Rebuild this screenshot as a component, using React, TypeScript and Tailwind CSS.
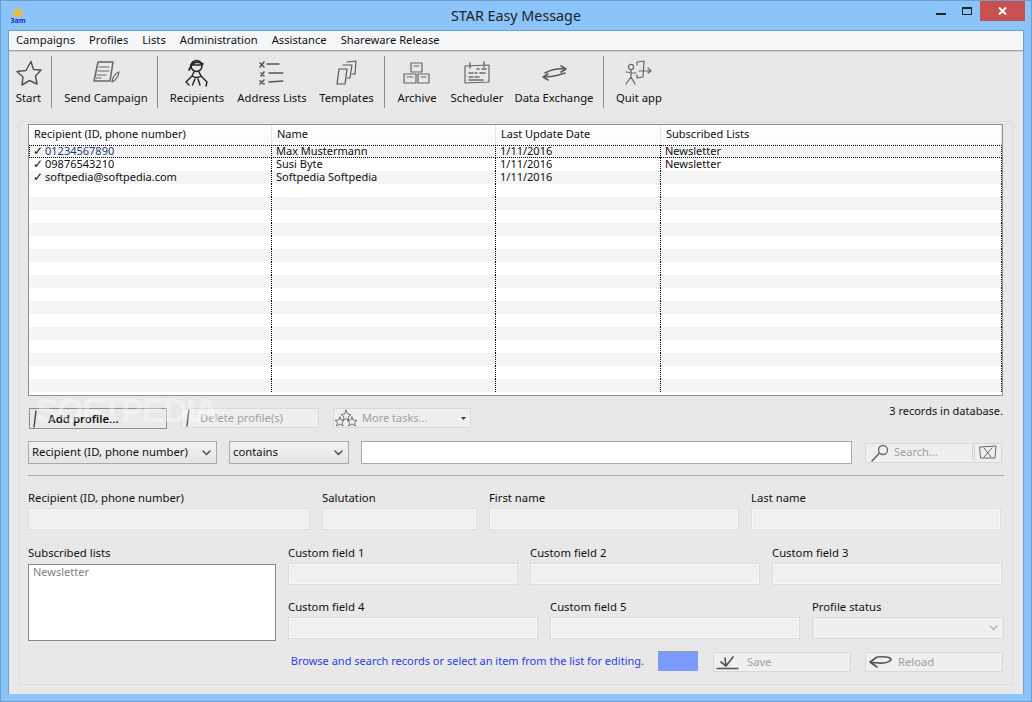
import React from "react";

const FONT = "font-['Noto_Sans','Open_Sans',sans-serif]";

const S = ({ w, h, box, children, className = "" }: { w: number; h: number; box?: string; children: React.ReactNode; className?: string }) => (
  <svg width={w} height={h} viewBox={box ?? `0 0 ${w} ${h}`} fill="none" stroke="currentColor" strokeLinecap="round" strokeLinejoin="round" className={className}>
    {children}
  </svg>
);

const StarIcon = () => (
  <S w={28} h={28} className="text-[#555]">
    <path d="M16 2.5 L18.5 10.5 L26 11 L20.5 17 L22 25 L14.5 21.5 L7 26 L8 18 L2 12.5 L11 11.5 Z" strokeWidth={1.5} />
  </S>
);
const SendIcon = () => (
  <S w={28} h={28} className="text-[#666]">
    <path d="M6 3 L21 3 L18 22 L2 22 Z" strokeWidth={1.5} />
    <path d="M7 8 L17 8 M6 12 L17 12 M5 16 L14 16 M4 19 L9 19" strokeWidth={1} />
    <path d="M20 23 Q21 15 27 13 Q26 20 20 23 Z" strokeWidth={1.3} />
  </S>
);
const PersonIcon = () => (
  <S w={28} h={30} className="text-[#222]">
    <circle cx="13.5" cy="8" r="5.5" strokeWidth={1.5} />
    <path d="M8 7 Q13 2 20 6 M6 12 L8.5 7 L18 7" strokeWidth={1.7} />
    <path d="M11 14 L9 18 L3 24 L6 27 M16 14 L18 18 L24 24 L23 28 M9 18 Q14 21 18 18 M9.5 27 L12 21 M17 27 L15 21" strokeWidth={1.4} />
  </S>
);
const ListIcon = () => (
  <S w={28} h={26} className="text-[#555]">
    <path d="M2 3 L6 7 M6 2 L2 7 M3 13 L6 16 M6 12 L3 16 M2 21 L6 24 M6 20 L2 24" strokeWidth={1.6} />
    <path d="M9 4 L21 4 M11 13 L25 13 M11 22 L25 21" strokeWidth={1.3} />
  </S>
);
const TemplatesIcon = () => (
  <S w={24} h={26} className="text-[#555]">
    <path d="M12 2 L21 1 L20 14 L17 14" strokeWidth={1.1} />
    <path d="M8 5 L17 5 L15 18 L12 18" strokeWidth={1.1} />
    <path d="M4 9 L12 9 L10 24 L2 24 Z" strokeWidth={1.2} />
  </S>
);
const ArchiveIcon = () => (
  <S w={28} h={24} className="text-[#666]">
    <path d="M8 2 L19 2 L19 11 L8 11 Z M1 13 L13 13 L13 22 L1 22 Z M15 13 L26 13 L26 22 L15 22 Z" strokeWidth={1.2} />
    <path d="M11 5 L16 5 M4 16 L10 16 M18 16 L23 16" strokeWidth={1.1} />
  </S>
);
const SchedulerIcon = () => (
  <S w={28} h={24} className="text-[#666]">
    <path d="M2 5 L26 4 L26 21 L2 22 Z" strokeWidth={1.2} />
    <path d="M7 2 L7 7 M21 1 L21 6" strokeWidth={1.4} />
    <path d="M14 8 L17 8 M19 8 L23 8 M6 12 L10 12 M12 12 L15 12 M17 12 L22 12 M6 16 L10 16 M12 16 L16 16 M6 19 L20 19" strokeWidth={1.4} strokeDasharray="2 1" />
  </S>
);
const ExchangeIcon = () => (
  <S w={28} h={16} className="text-[#5a5a5a]">
    <path d="M5 8 Q14 3 26 4 L21 1 M26 4 L21 7" strokeWidth={1.5} />
    <path d="M25 8 Q14 12 3 12 L8 9 M3 12 L8 15" strokeWidth={1.5} />
  </S>
);
const QuitIcon = () => (
  <S w={28} h={26} className="text-[#666]">
    <circle cx="6" cy="7" r="2.6" strokeWidth={1.2} />
    <path d="M6 10 L6 17 L1 24 M6 17 L10 24 M1 12 L11 13" strokeWidth={1.2} />
    <path d="M12 5 L12 2 L19 1 L18 17 L12 18 L12 15" strokeWidth={1.2} />
    <path d="M14 11 L26 11 M23 8 L26 11 L23 13" strokeWidth={1.2} />
  </S>
);
const Pen = ({ c }: { c: string }) => (
  <S w={6} h={18} className={c}>
    <path d="M4 1 L2 17" strokeWidth={1.4} />
  </S>
);
const StarsSmall = () => (
  <S w={24} h={18} className="text-[#666]">
    <path d="M12 1 L13.5 5 L17 5.5 L14 8 L15 11.5 L12 9.5 L9 11.5 L10 8 L7 5.5 L10.5 5 Z" strokeWidth={0.9} />
    <path d="M6 8 L7 11 L10 11.5 L8 13.5 L9 17 L6 15 L2.5 17 L3.5 13.5 L1 11.5 L4.5 11 Z" strokeWidth={0.9} />
    <path d="M18 8 L19 11 L23 11.5 L20.5 13.5 L21.5 17 L18 15 L14.5 17 L15.5 13.5 L13 11.5 L16.5 11 Z" strokeWidth={0.9} />
  </S>
);
const Chevron = ({ c = "text-[#555]" }: { c?: string }) => (
  <S w={9} h={6} className={c}>
    <path d="M1 1 L4.5 4.5 L8 1" strokeWidth={1.6} />
  </S>
);

const menus = ["Campaigns", "Profiles", "Lists", "Administration", "Assistance", "Shareware Release"];

const Tool = ({ w, label, children }: { w: number; label: string; children: React.ReactNode }) => (
  <div className="flex flex-col items-center shrink-0" style={{ width: w }}>
    <div className="h-[36px] mt-[3px] mb-[-1px] flex items-center justify-center">{children}</div>
    <div className="text-[11.3px] leading-[16px] whitespace-nowrap text-[#111]">{label}</div>
  </div>
);
const Sep = () => <div className="w-px h-[52px] bg-[#8a8a8a] shrink-0 self-start mt-[4px]" />;

const rows = [
  ["01234567890", "Max Mustermann", "1/11/2016", "Newsletter"],
  ["09876543210", "Susi Byte", "1/11/2016", "Newsletter"],
  ["softpedia@softpedia.com", "Softpedia Softpedia", "1/11/2016", ""],
];
const widths = ["w-[243px]", "w-[224px]", "w-[165px]", "flex-1"];
const allRows = Array.from({ length: 19 }, (_, i) => rows[i] ?? ["", "", "", ""]);

const Disabled = ({ w, h = 22 }: { w: number; h?: number }) => (
  <div className="shrink-0 bg-[#f0f0f0] border border-[#dcdcdc] shadow-[inset_0_0_0_1px_#f8f8f8]" style={{ width: w, height: h }} />
);
const Field = ({ label, w }: { label: string; w: number }) => (
  <div className="shrink-0" style={{ width: w }}>
    <div className="text-[11.3px] leading-[16px] h-[16px] text-[#111] whitespace-nowrap">{label}</div>
    <div className="mt-[2px]"><Disabled w={w} /></div>
  </div>
);
const DisButton = ({ w, icon, label, pad }: { w: number; icon: React.ReactNode; label: string; pad: number }) => (
  <div className="h-[20px] shrink-0 flex items-center bg-[#efefef] border border-[#d8d8d8] text-[11.2px] text-[#a0a0a0]" style={{ width: w }}>
    <div className="shrink-0" style={{ width: pad }}>{icon}</div>
    <span className="whitespace-nowrap">{label}</span>
  </div>
);
const SelectBox = ({ w, label }: { w: number; label: string }) => (
  <div className="h-[23px] shrink-0 flex items-center justify-between pl-[3px] pr-[5px] bg-gradient-to-b from-[#f2f2f2] to-[#e5e5e5] border border-[#a9a9a9] text-[11.3px] text-[#111]" style={{ width: w }}>
    <span className="whitespace-nowrap">{label}</span>
    <Chevron />
  </div>
);

export default function App() {
  return (
    <div className={`w-[1032px] h-[702px] relative overflow-hidden flex flex-col bg-[#8bc4f9] border border-[#6f9fcf] ${FONT}`}>
      {/* title bar */}
      <div className="h-[29px] shrink-0 flex items-start relative">
        <div className="w-[22px] ml-[6px] mt-[6px] flex flex-col items-center">
          <svg width="14" height="11" viewBox="0 0 14 11"><path d="M7 0 L8.8 3.8 L13.5 4.2 L10 7 L11 11 L7 9 L3 11 L4 7 L0.5 4.2 L5.2 3.8 Z" fill="#f0bc2e" /></svg>
          <span className="text-[7px] leading-[6px] font-bold text-[#1030d0]">3am</span>
        </div>
        <div className="flex-1 text-center text-[14.3px] leading-[30px] text-[#222] pr-[28px]">STAR Easy Message</div>
        <div className="w-[10px] h-[2px] bg-[#222] absolute left-[935px] top-[12px]" />
        <div className="w-[10px] h-[8px] border border-[#222] border-t-2 absolute left-[961px] top-[6px]" />
        <div className="w-[45px] h-[20px] bg-[#c75050] absolute left-[979px] top-0 flex items-center justify-center">
          <svg width="9" height="8" viewBox="0 0 9 8"><path d="M1 0.5 L8 7.5 M8 0.5 L1 7.5" stroke="#fff" strokeWidth="2" /></svg>
        </div>
      </div>

      {/* client */}
      <div className="mx-[7px] mb-[7px] flex-1 flex flex-col bg-[#e8e8e8] border-t border-l border-r border-[#6f9fcf] text-[#111] min-h-0">
        <div className="h-[19px] shrink-0 bg-[#f5f6f7] flex items-center text-[11.2px] pl-[7px] gap-[14px]">
          {menus.map((m) => <span key={m} className="whitespace-nowrap">{m}</span>)}
        </div>
        <div className="h-[2px] shrink-0 bg-[#a8a8a8] border-b border-[#d0d0d0]" />

        {/* toolbar */}
        <div className="h-[69px] shrink-0 flex items-start">
          <Tool w={39} label="Start"><StarIcon /></Tool>
          <div className="w-[3px]" /><Sep />
          <div className="w-[8px]" />
          <Tool w={92} label="Send Campaign"><SendIcon /></Tool>
          <div className="w-[5px]" /><Sep />
          <div className="w-px" />
          <Tool w={76} label="Recipients"><PersonIcon /></Tool>
          <Tool w={74} label="Address Lists"><ListIcon /></Tool>
          <Tool w={75} label="Templates"><TemplatesIcon /></Tool>
          <Sep />
          <Tool w={64} label="Archive"><ArchiveIcon /></Tool>
          <Tool w={56} label="Scheduler"><SchedulerIcon /></Tool>
          <Tool w={98} label="Data Exchange"><ExchangeIcon /></Tool>
          <Sep />
          <Tool w={70} label="Quit app"><QuitIcon /></Tool>
        </div>

        {/* panel */}
        <div className="ml-[10px] mr-[10px] mb-[9px] flex-1 border border-[#dcdcdc] pl-[8px] pr-[9px] pt-[2px] min-h-0">
          {/* table */}
          <div className="h-[272px] border border-[#8a8f99] bg-white overflow-hidden">
            <div className="h-[20px] flex text-[11px] items-center bg-gradient-to-b from-white to-[#f8f9fa]">
              {["Recipient (ID, phone number)", "Name", "Last Update Date", "Subscribed Lists"].map((h, i) => (
                <div key={h} className={`${widths[i]} shrink-0 pl-[5px] h-full leading-[18px] border-r border-[#e4e8ee] whitespace-nowrap`}>{h}</div>
              ))}
            </div>
            {allRows.map((r, i) => (
              <div key={i} className={`h-[13px] flex text-[11px] leading-[12px] ${i % 2 === 0 ? "bg-[#f5f5f5]" : "bg-white"} ${i === 0 ? "outline-1 outline-dotted outline-black -outline-offset-1" : ""}`}>
                {r.map((c, j) => (
                  <div key={j} className={`${widths[j]} shrink-0 whitespace-nowrap border-r border-dotted border-black pl-[4px]`}>
                    {j === 0 && r[0] && <span className="mr-[2px] text-[12px] leading-[12px]">✓</span>}
                    {i === 0 && j === 0 ? <span className="text-[#1a3f6f]">{c}</span> : c}
                  </div>
                ))}
              </div>
            ))}
          </div>

          {/* action row */}
          <div className="flex items-start mt-[12px] h-[21px]">
            <div className="ml-[1px] w-[138px] h-[21px] flex items-center bg-[#e9e9e9] border border-[#8f8f8f] text-[11.4px] font-semibold text-[#111] pl-[2px]">
              <Pen c="text-[#444]" /><span className="ml-[10px] whitespace-nowrap">Add profile...</span>
            </div>
            <div className="w-[14px]" />
            <DisButton w={138} pad={18} icon={<div className="pl-[3px]"><Pen c="text-[#555]" /></div>} label="Delete profile(s)" />
            <div className="w-[14px]" />
            <div className="h-[20px] w-[138px] shrink-0 flex items-center bg-[#efefef] border border-[#d8d8d8] text-[11px] text-[#a0a0a0]">
              <StarsSmall /><span className="ml-[4px] whitespace-nowrap flex-1">More tasks...</span>
              <svg width="5" height="3" viewBox="0 0 5 3" className="mr-[4px]"><path d="M0 0 L5 0 L2.5 3 Z" fill="#333" /></svg>
            </div>
            <div className="flex-1 text-right text-[11px] leading-[14px] -mt-[4px] whitespace-nowrap">3 records in database.</div>
          </div>

          {/* filter row */}
          <div className="flex items-center mt-[12px]">
            <SelectBox w={189} label="Recipient (ID, phone number)" />
            <div className="w-[12px]" />
            <SelectBox w={120} label="contains" />
            <div className="w-[12px]" />
            <div className="w-[491px] h-[23px] bg-white border border-[#a9a9a9] shrink-0" />
            <div className="w-[13px]" />
            <div className="w-[108px] h-[20px] shrink-0 flex items-center bg-[#efefef] border border-[#d8d8d8] text-[11px] text-[#a0a0a0]">
              <S w={22} h={18} className="text-[#666] ml-[3px]">
                <circle cx="14" cy="6" r="4.5" strokeWidth={1.3} />
                <path d="M10.5 9 L3 17" strokeWidth={1.6} />
              </S>
              <span className="ml-[3px]">Search...</span>
            </div>
            <div className="w-[28px] h-[20px] ml-px shrink-0 flex items-center justify-center bg-[#efefef] border border-[#d8d8d8]">
              <S w={18} h={15} className="text-[#666]">
                <path d="M1 2 L17 1 L16 13 L2 13 Z M5 3 L12 12 M13 3 L5 12" strokeWidth={1} />
              </S>
            </div>
          </div>

          <div className="h-px bg-[#a8a8a8] mt-[11px] w-[976px]" />

          {/* fields 1 */}
          <div className="flex mt-[14px] gap-[12px]">
            <Field label="Recipient (ID, phone number)" w={282} />
            <Field label="Salutation" w={155} />
            <Field label="First name" w={250} />
            <Field label="Last name" w={250} />
          </div>

          {/* fields 2 */}
          <div className="flex mt-[15px]">
            <div className="w-[248px] shrink-0">
              <div className="text-[11.3px] leading-[16px] h-[16px] whitespace-nowrap">Subscribed lists</div>
              <div className="mt-[3px] h-[77px] bg-white border border-[#828790] pl-[4px] text-[11px] leading-[14px] text-[#808080]">Newsletter</div>
            </div>
            <div className="ml-[12px] flex flex-col">
              <div className="flex gap-[12px]">
                <Field label="Custom field 1" w={230} />
                <Field label="Custom field 2" w={230} />
                <Field label="Custom field 3" w={230} />
              </div>
              <div className="flex gap-[12px] mt-[14px]">
                <Field label="Custom field 4" w={250} />
                <Field label="Custom field 5" w={250} />
                <div className="w-[192px] shrink-0">
                  <div className="text-[11.3px] leading-[16px] h-[16px] whitespace-nowrap">Profile status</div>
                  <div className="mt-[2px] h-[22px] bg-[#efefef] border border-[#d8d8d8] flex items-center justify-end pr-[5px]"><Chevron c="text-[#bbb]" /></div>
                </div>
              </div>
            </div>
          </div>

          {/* bottom */}
          <div className="flex items-start mt-[10px] h-[21px]">
            <div className="w-[616px] shrink-0 text-right text-[11px] leading-[20px] text-[#2a3fe0] whitespace-nowrap">Browse and search records or select an item from the list for editing.</div>
            <div className="w-[40px] h-[20px] ml-[14px] bg-[#7b9bff] border-t border-[#999] shrink-0" />
            <div className="w-[15px]" />
            <div className="mt-[1px] flex">
              <DisButton w={138} pad={33} icon={
                <S w={24} h={18} className="text-[#555] ml-[2px]">
                  <path d="M1 15.5 L22 15.5" strokeWidth={1.4} />
                  <path d="M10 13 L9 5 M10 13 L5 9 M10 13 L17 4" strokeWidth={1.7} />
                </S>
              } label="Save" />
              <div className="w-[14px]" />
              <DisButton w={138} pad={32} icon={
                <S w={26} h={16} className="text-[#555] ml-[2px]">
                  <path d="M9 3 L2 8 L9 13 M2 8 Q18 11 23 6 Q23 2 10 3" strokeWidth={1.6} />
                </S>
              } label="Reload" />
            </div>
          </div>
        </div>
      </div>

      {/* watermark */}
      <div className="absolute left-[35px] top-[391px] text-[34px] leading-[36px] font-bold tracking-[-1.5px] text-white/40 pointer-events-none whitespace-nowrap font-['Liberation_Sans',sans-serif]">SOFTPEDIA</div>
    </div>
  );
}
